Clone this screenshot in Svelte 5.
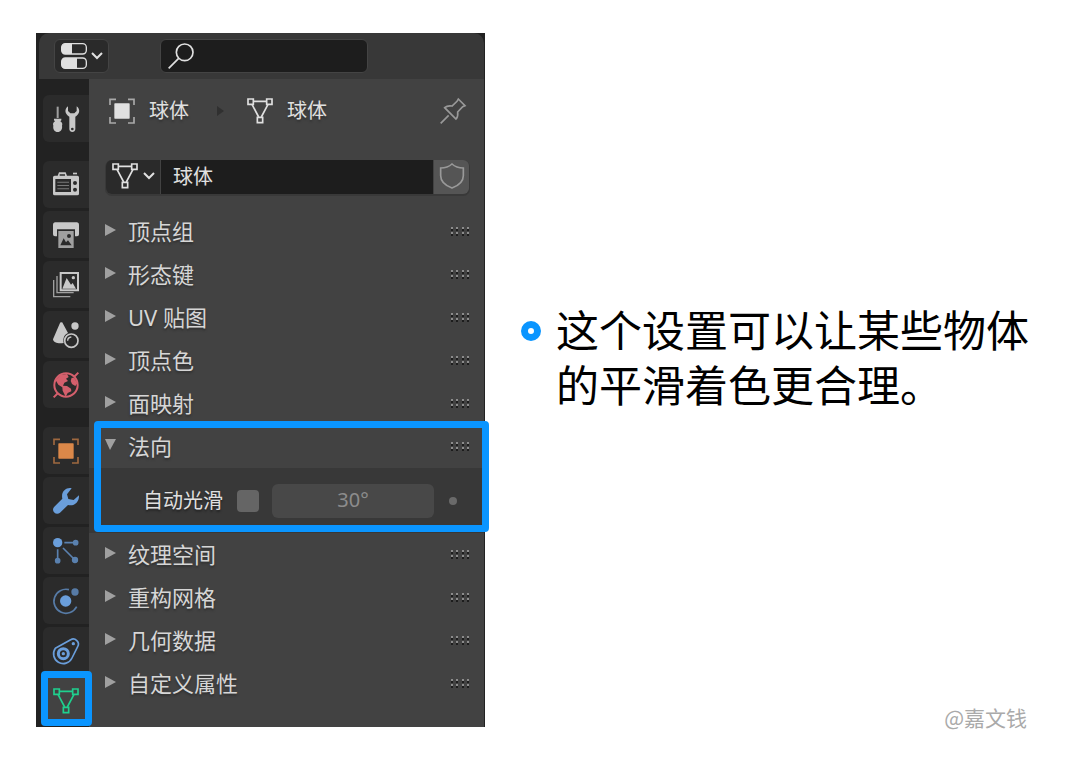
<script lang="ts">
	// Mesh data properties editor next to a short note about the Normals panel
	type Tab = { id: string; label: string; tone: string; gap?: boolean };

	const tabs: Tab[] = [
		{ id: 'tool', label: '工具', tone: 'grey' },
		{ id: 'render', label: '渲染', tone: 'grey', gap: true },
		{ id: 'output', label: '输出', tone: 'grey' },
		{ id: 'view', label: '视图层', tone: 'grey' },
		{ id: 'scene', label: '场景', tone: 'grey' },
		{ id: 'world', label: '世界', tone: 'red' },
		{ id: 'object', label: '物体', tone: 'orange', gap: true },
		{ id: 'modifier', label: '修改器', tone: 'blue' },
		{ id: 'particles', label: '粒子', tone: 'blue' },
		{ id: 'physics', label: '物理', tone: 'blue' },
		{ id: 'constraint', label: '约束', tone: 'blue' },
		{ id: 'data', label: '数据', tone: 'green' }
	];

	const before = ['顶点组', '形态键', 'UV 贴图', '顶点色', '面映射'];
	const after = ['纹理空间', '重构网格', '几何数据', '自定义属性'];

	let active = $state('data');
	let search = $state('');
	let meshName = $state('球体');
	let autoSmooth = $state(false);
	let angle = $state('30°');
</script>

{#snippet mesh()}
	<svg class="icon" viewBox="0 0 78 78" fill="none" stroke="currentColor" stroke-width="5" aria-hidden="true">
		<path d="M19 10h40M15 19l20 38M63 19L43 57" />
		<path d="M3 3h16v16H3zM59 3h16v16H59zM31 58h16v16H31z" />
	</svg>
{/snippet}

{#snippet objectIcon()}
	<svg class="icon" viewBox="0 0 78 78" aria-hidden="true">
		<path d="M3 21V4h18M57 4h18v17M75 57v18H57M21 75H3V57" fill="none" stroke="currentColor" stroke-width="5" opacity=".65" />
		<rect x="16" y="16" width="46" height="46" rx="2" fill="currentColor" />
	</svg>
{/snippet}

{#snippet chevron()}
	<svg class="chevron" viewBox="0 0 12 8" fill="none" stroke="currentColor" stroke-width="2" aria-hidden="true">
		<path d="M1 1l5 5 5-5" />
	</svg>
{/snippet}

{#snippet grip()}
	<svg class="grip" viewBox="0 0 20 12" aria-hidden="true">
		{#each [1, 6, 12, 17] as x}
			{#each [1, 6] as y}
				<rect {x} {y} width="2" height="2" fill="#8c8c8c" />
				<rect {x} y={y + 2} width="2" height="2" fill="#1c1c1c" />
			{/each}
		{/each}
	</svg>
{/snippet}

{#snippet fold(label: string, open: boolean)}
	<button class="fold" aria-expanded={open}>
		<svg class="arrow" viewBox="0 0 12 12" aria-hidden="true">
			<path d={open ? 'M1 0h11L6 11z' : 'M1 0l11 6-11 6z'} fill="#a0a0a0" />
		</svg>
		<span class="fold-label">{label}</span>
		{@render grip()}
	</button>
{/snippet}

{#snippet tabIcon(id: string)}
	{#if id === 'data'}
		{@render mesh()}
	{:else if id === 'object'}
		{@render objectIcon()}
	{:else}
		<svg class="icon" viewBox="0 0 78 78" fill="currentColor" aria-hidden="true">
			{#if id === 'tool'}
				<path d="M11 2h6v34h-6z" opacity=".75" />
				<path d="M3 38h22v5l-3 3c6 4 7 8 5 13 2 10-4 19-13 19S-1 69 1 59c-2-5-1-9 5-13l-3-3z" />
				<path d="M45 1c-13 10-8 25 4 31v37c0 12 18 12 18 0V32c12-6 17-21 4-31v14l-7 7H52l-7-7zM58 65a4 4 0 1 1 0 8 4 4 0 0 1 0-8z" fill-rule="evenodd" />
			{:else if id === 'render'}
				<path d="M60 2h12v5H60z" />
				<path
					d="M5 11h9l4-10h20l4 10h31q5 0 5 5v49q0 5-5 5H5q-5 0-5-5V16q0-5 5-5zM20 11h16V7H20zM7 21v39h47V21zM66 27a6 6 0 1 0 0 12 6 6 0 0 0 0-12zM66 47a6 6 0 1 0 0 12 6 6 0 0 0 0-12z"
					fill-rule="evenodd"
				/>
				<path d="M13 29h35v3H13zM13 39h35v3H13zM13 49h35v3H13z" opacity=".5" />
			{:else if id === 'output'}
				<path d="M7 1h64q7 0 7 8v28q0 6-6 6h-6V22H12v21H6q-6 0-6-6V9q0-8 7-8z" />
				<path d="M16 27h46v51H16zM22 70h34L45 55l-6 6-7-12zM48 36a6 6 0 1 0 0 12 6 6 0 0 0 0-12z" fill-rule="evenodd" opacity=".75" />
			{:else if id === 'view'}
				<path d="M2 24v50h50M12 12v50h50" fill="none" stroke="currentColor" stroke-width="4" opacity=".75" />
				<path d="M20 0h58v58H20zM26 6v46h46V6z" fill-rule="evenodd" />
				<path d="M28 50l13-32 13 20 5-5 10 17z" />
				<circle cx="61" cy="17" r="5" />
			{:else if id === 'scene'}
				<path d="M25 1q4 0 5 4l15 28C34 38 29 48 32 63 18 66 1 63 0 52L20 5q1-4 5-4z" />
				<circle cx="66" cy="12" r="11" />
				<circle cx="55" cy="56" r="20" fill="none" stroke="currentColor" stroke-width="5" />
				<path d="M44 56q0-10 11-11" fill="none" stroke="currentColor" stroke-width="4" />
			{:else if id === 'world'}
				<circle cx="39" cy="39" r="35" fill="none" stroke="currentColor" stroke-width="6" />
				<path d="M63 15L76 2M15 63L2 76" stroke="currentColor" stroke-width="6" />
				<path d="M8 25L22 9l20-3 5 9-8 5 6 7-11 5-4 9 12 1 12 8 1 8-11 5-6 11-9-18-1-10-12-8z" />
				<path d="M56 17l8 1 9 16-6 8-10-6-4-9z" />
			{:else if id === 'modifier'}
				<path d="M56 1C41-3 23 10 28 32L4 56c-12 14 6 28 17 18l24-23c19 5 34-10 33-29L62 36 46 33 42 19z" />
			{:else if id === 'particles'}
				<circle cx="14" cy="14" r="14" />
				<g opacity=".75" stroke="currentColor" stroke-width="5">
					<path d="M34 14h34M14 34v34M30 30l36 36" />
					<circle cx="68" cy="14" r="6" />
					<circle cx="14" cy="68" r="6" />
					<circle cx="66" cy="66" r="7" />
				</g>
			{:else if id === 'physics'}
				<circle cx="38" cy="39" r="17" />
				<g opacity=".7">
					<circle cx="66" cy="12" r="11" />
					<path d="M48 5a36 36 0 1 0 23 51" fill="none" stroke="currentColor" stroke-width="5" />
				</g>
			{:else if id === 'constraint'}
				<path d="M7 31L53 5C66-2 82 12 74 26L57 60A29 29 0 1 1 7 31z" fill="none" stroke="currentColor" stroke-width="5" />
				<circle cx="31" cy="47" r="15" fill="none" stroke="currentColor" stroke-width="9" />
				<circle cx="31" cy="47" r="5" />
				<circle cx="61" cy="17" r="5" />
			{/if}
		</svg>
	{/if}
{/snippet}

<main class="page">
	<section class="editor">
		<header class="header">
			<button class="editor-type" aria-label="编辑器类型">
				<svg class="icon" viewBox="0 0 78 78" aria-hidden="true">
					<g fill="none" stroke="currentColor" stroke-width="4">
						<rect x="2" y="2" width="74" height="31" rx="11" />
						<rect x="2" y="45" width="74" height="31" rx="11" />
					</g>
					<path d="M13 2h20v31H13Q2 33 2 22v-9Q2 2 13 2zM13 45h35v31H13Q2 76 2 65v-9q0-11 11-11z" fill="currentColor" />
				</svg>
				{@render chevron()}
			</button>
			<label class="search">
				<svg class="icon" viewBox="0 0 78 78" fill="none" stroke="currentColor" stroke-width="5" aria-hidden="true">
					<circle cx="50" cy="28" r="25" />
					<path d="M32 46L2 76" />
				</svg>
				<input type="text" aria-label="搜索" bind:value={search} />
			</label>
		</header>

		<div class="body">
			<nav class="tabs">
				{#each tabs as tab (tab.id)}
					<button
						class="tab {tab.tone}"
						class:gap={tab.gap}
						class:active={active === tab.id}
						aria-label={tab.label}
						onclick={() => (active = tab.id)}
					>
						{@render tabIcon(tab.id)}
						{#if tab.id === 'data'}
							<span class="marker tab-marker"></span>
						{/if}
					</button>
				{/each}
			</nav>

			<div class="content">
				<div class="crumbs">
					{@render objectIcon()}
					<span class="crumb">球体</span>
					<svg class="crumb-arrow" viewBox="0 0 8 10" aria-hidden="true"><path d="M0 0l7 5-7 5z" fill="#303030" /></svg>
					{@render mesh()}
					<span class="crumb">球体</span>
					<button class="pin" aria-label="固定">
						<svg class="icon" viewBox="0 0 78 78" fill="none" stroke="currentColor" stroke-width="5" aria-hidden="true">
							<path d="M2 76l24-24M55 3l20 20-7 3-15 16q2 14-5 21L14 29q8-7 22-5L51 10z" />
						</svg>
					</button>
				</div>

				<div class="datablock">
					<button class="browse" aria-label="浏览网格数据">
						{@render mesh()}
						{@render chevron()}
					</button>
					<input class="name" type="text" aria-label="名称" bind:value={meshName} />
					<button class="shield" aria-label="伪用户">
						<svg class="icon" viewBox="0 0 78 78" fill="none" stroke="currentColor" stroke-width="5" aria-hidden="true">
							<path d="M39 3q13 12 34 12v23q0 24-34 37Q5 62 5 38V15Q26 15 39 3z" />
						</svg>
					</button>
				</div>

				{#each before as label}
					{@render fold(label, false)}
				{/each}

				<div class="normals">
					{@render fold('法向', true)}
					<div class="settings">
						<label for="auto-smooth">自动光滑</label>
						<input id="auto-smooth" class="check" type="checkbox" bind:checked={autoSmooth} />
						<input class="angle" type="text" aria-label="角度" disabled={!autoSmooth} bind:value={angle} />
						<span class="dot"></span>
					</div>
					<span class="marker panel-marker"></span>
				</div>

				{#each after as label}
					{@render fold(label, false)}
				{/each}
			</div>
		</div>
	</section>

	<aside class="side">
		<ul class="note">
			<li>这个设置可以让某些物体的平滑着色更合理。</li>
		</ul>
		<p class="credit">@嘉文钱</p>
	</aside>
</main>

<style>
	:global(body) {
		background: #fff;
	}

	.page {
		box-sizing: border-box;
		display: grid;
		grid-template-columns: minmax(0, 449px) minmax(0, 1fr);
		min-height: 100vh;
		padding: 33px 48px 25px 36px;
		font-family: 'Noto Sans', 'Noto Sans CJK SC', sans-serif;
	}

	button,
	input {
		box-sizing: border-box;
		margin: 0;
		padding: 0;
		border: none;
		font: inherit;
		color: inherit;
	}

	.editor {
		align-self: start;
		background: #222;
		color: #e0e0e0;
		font-size: 20px;
	}

	.icon {
		width: 26px;
		height: 26px;
		flex-shrink: 0;
		overflow: visible;
	}

	.chevron {
		width: 12px;
		height: 8px;
		flex-shrink: 0;
	}

	.header {
		display: flex;
		align-items: center;
		gap: 51px;
		height: 46px;
		margin: 0 1px 0 3px;
		padding-left: 15px;
		background: #383838;
		border-radius: 10px 10px 0 0;
		box-sizing: border-box;
	}

	.editor-type {
		display: flex;
		align-items: center;
		justify-content: center;
		gap: 4px;
		width: 55px;
		height: 34px;
		background: #2a2a2a;
		border: 1px solid #444;
		border-radius: 6px;
	}

	.search {
		display: flex;
		align-items: center;
		gap: 8px;
		width: 208px;
		height: 34px;
		padding: 0 7px;
		box-sizing: border-box;
		background: #1d1d1d;
		border: 1px solid #444;
		border-radius: 6px;
	}

	.search input {
		flex: 1;
		min-width: 0;
		background: transparent;
		outline: none;
	}

	.body {
		display: flex;
	}

	.tabs {
		display: flex;
		flex-direction: column;
		gap: 3px;
		width: 53px;
		flex-shrink: 0;
		padding: 16px 0 3px 7px;
		box-sizing: border-box;
	}

	.tab {
		position: relative;
		display: flex;
		align-items: center;
		justify-content: center;
		height: 47px;
		background: #2b2b2b;
		border-radius: 6px 0 0 6px;
	}

	.tab.gap {
		margin-top: 16px;
	}

	.tab.active {
		background: #424242;
	}

	.grey {
		color: #c8c8c8;
	}

	.red {
		color: #d45f6c;
	}

	.orange {
		color: #db8849;
	}

	.blue {
		color: #6a9edb;
	}

	.green {
		color: #1fd08e;
	}

	.content {
		flex: 1;
		min-width: 0;
		margin-right: 1px;
		padding-bottom: 22px;
		background: #424242;
	}

	.crumbs {
		display: flex;
		align-items: center;
		gap: 14px;
		height: 64px;
		padding: 0 18px 0 20px;
		text-shadow: 0 2px 2px #2228;
	}

	.crumb {
		padding-bottom: 3px;
	}

	.crumb-arrow {
		width: 8px;
		height: 10px;
		margin: 0 8px 0 14px;
	}

	.pin {
		display: flex;
		margin-left: auto;
		background: transparent;
		color: #999;
	}

	.datablock {
		display: flex;
		gap: 1px;
		height: 34px;
		margin: 17px 15px 16px 17px;
		border-radius: 6px;
		overflow: hidden;
		box-shadow: 0 1px 0 1px #393939;
	}

	.browse {
		display: flex;
		align-items: center;
		justify-content: center;
		gap: 5px;
		width: 54px;
		padding-bottom: 2px;
		background: #2a2a2a;
	}

	.name {
		flex: 1;
		min-width: 0;
		padding: 0 12px 3px;
		background: #1d1d1d;
	}

	.shield {
		display: flex;
		align-items: center;
		justify-content: center;
		width: 35px;
		padding-bottom: 2px;
		background: #555;
		color: #999;
	}

	.fold {
		display: flex;
		align-items: center;
		gap: 12px;
		width: 100%;
		height: 43px;
		padding: 0 14px 0 15px;
		background: transparent;
		color: #d6d6d6;
		font-size: 22px;
		text-shadow: 0 2px 2px #2228;
	}

	.arrow {
		width: 12px;
		height: 12px;
		padding-bottom: 3px;
	}

	.fold-label {
		flex: 1;
		padding-bottom: 4px;
		text-align: left;
	}

	.grip {
		width: 20px;
		height: 12px;
	}

	.normals {
		position: relative;
	}

	.settings {
		display: flex;
		align-items: center;
		height: 65px;
		padding: 0 27px 0 54px;
		box-sizing: border-box;
		background: #383838;
		text-shadow: 0 2px 2px #1118;
	}

	.settings label {
		padding-bottom: 3px;
	}

	.check {
		appearance: none;
		width: 22px;
		height: 22px;
		margin-left: 14px;
		background: #656565;
		border-radius: 4px;
	}

	.check:checked {
		background: #4772b3;
	}

	.angle {
		flex: 1;
		min-width: 0;
		height: 34px;
		margin: 0 15px 0 13px;
		padding-bottom: 3px;
		background: #484848;
		border-radius: 6px;
		color: #8c8c8c;
		text-align: center;
	}

	.dot {
		width: 8px;
		height: 8px;
		background: #6a6a6a;
		border-radius: 50%;
	}

	.marker {
		position: absolute;
		border: 7px solid #0a95ff;
		border-radius: 4px;
		pointer-events: none;
		z-index: 1;
	}

	.tab-marker {
		inset: -6px -3px -2px -2px;
	}

	.panel-marker {
		inset: -4px -5px 1px 5px;
	}

	.side {
		display: flex;
		flex-direction: column;
		padding: 268px 0 3px 36px;
		font-family: 'Noto Sans CJK SC', sans-serif;
	}

	.note {
		margin: 0;
		padding: 0;
		list-style: none;
		color: #000;
		font-size: 43px;
		line-height: 55px;
	}

	.note li {
		display: flex;
		gap: 15px;
	}

	.note li::before {
		content: '';
		width: 6px;
		height: 6px;
		flex-shrink: 0;
		margin-top: 20px;
		border: 7px solid #0a95ff;
		border-radius: 50%;
	}

	.credit {
		margin: auto 5px 0 0;
		color: #aaa;
		font-size: 21px;
		line-height: 30px;
		text-align: right;
	}
</style>
